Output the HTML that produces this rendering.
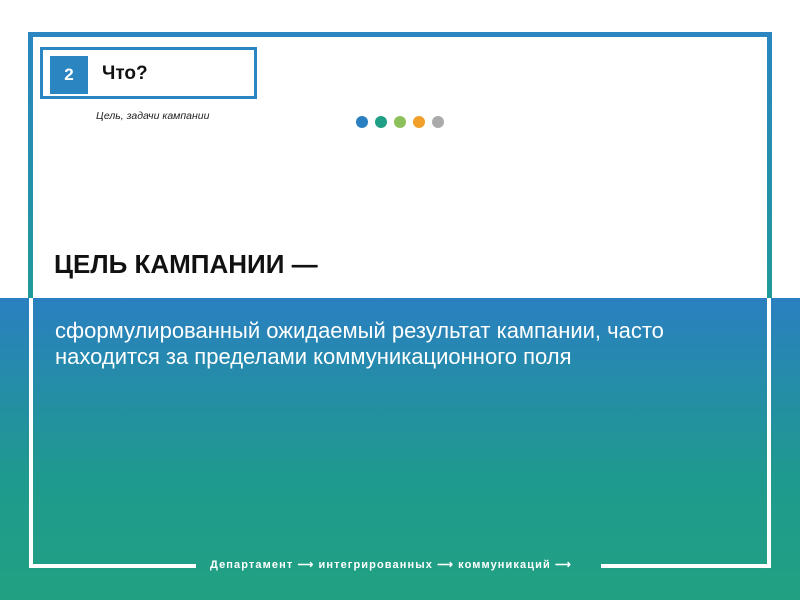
<!DOCTYPE html>
<html><head><meta charset="utf-8"><style>
body{margin:0;width:800px;height:600px;position:relative;overflow:hidden;font-family:"Liberation Sans",sans-serif;background:#fff}
.grad{position:absolute;left:0;top:298px;width:800px;height:302px;background:linear-gradient(#2a80c0,#1f9a8e 60%,#21a182)}
.a{position:absolute}
</style></head><body>
<div class="grad"></div>
<div class="a" style="left:28px;top:32px;width:744px;height:5px;background:#2a85c0"></div>
<div class="a" style="left:28px;top:32px;width:5px;height:266px;background:linear-gradient(#2a85c0,#1f9a9a)"></div>
<div class="a" style="left:767px;top:32px;width:5px;height:266px;background:linear-gradient(#2a85c0,#1f9a9a)"></div>
<div class="a" style="left:29px;top:298px;width:4px;height:270px;background:#fff"></div>
<div class="a" style="left:767px;top:298px;width:4px;height:270px;background:#fff"></div>
<div class="a" style="left:29px;top:564px;width:167px;height:4px;background:#fff"></div>
<div class="a" style="left:601px;top:564px;width:170px;height:4px;background:#fff"></div>
<div class="a" style="left:210px;top:558px;color:#fff;font-size:11px;font-weight:bold;white-space:nowrap;letter-spacing:1.1px">Департамент ⟶ интегрированных ⟶ коммуникаций ⟶</div>
<div class="a" style="left:40px;top:47px;width:217px;height:52px;border:3px solid #2a85c0;box-sizing:border-box;background:#fff"></div>
<div class="a" style="left:50px;top:56px;width:38px;height:38px;background:#2a85c0;color:#fff;font-size:17px;font-weight:bold;text-align:center;line-height:38px">2</div>
<div class="a" style="left:102px;top:63px;font-size:19px;font-weight:bold;color:#111">Что?</div>
<div class="a" style="left:96px;top:110px;font-size:10.5px;font-style:italic;color:#222">Цель, задачи кампании</div>
<div class="a" style="left:356px;top:116px;width:12px;height:12px;border-radius:50%;background:#2a7fc0"></div>
<div class="a" style="left:375px;top:116px;width:12px;height:12px;border-radius:50%;background:#1fa086"></div>
<div class="a" style="left:394px;top:116px;width:12px;height:12px;border-radius:50%;background:#8cc05a"></div>
<div class="a" style="left:413px;top:116px;width:12px;height:12px;border-radius:50%;background:#f0a02a"></div>
<div class="a" style="left:432px;top:116px;width:12px;height:12px;border-radius:50%;background:#aaa"></div>
<div class="a" style="left:54px;top:249px;font-size:26px;font-weight:bold;color:#111;white-space:nowrap">ЦЕЛЬ КАМПАНИИ —</div>
<div class="a" style="left:55px;top:318px;font-size:22px;color:#fff;line-height:26px;white-space:nowrap">сформулированный ожидаемый результат кампании, часто<br>находится за пределами коммуникационного поля</div>
</body></html>
